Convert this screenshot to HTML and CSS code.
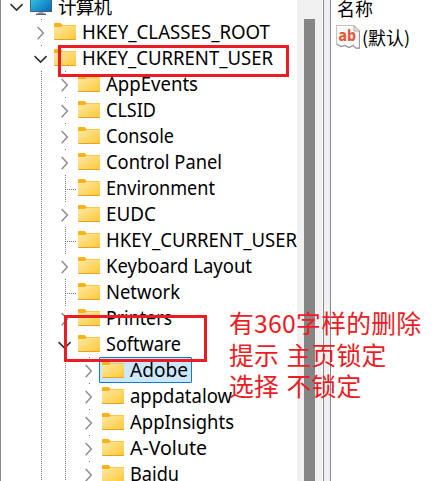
FILE: index.html
```
<!DOCTYPE html>
<html lang="zh-CN">
<head>
<meta charset="utf-8">
<title>注册表编辑器</title>
<link rel="stylesheet" href="styles.css">
</head>
<body>
<svg class="defs" aria-hidden="true">
  <defs>
    <linearGradient id="gold" x1="0" y1="0" x2="1" y2="1"><stop offset="0" stop-color="#ffe9a6"/><stop offset="1" stop-color="#ffc938"/></linearGradient>
    <linearGradient id="screen" x1="0" y1="0" x2="1" y2="1"><stop offset="0" stop-color="#36d5e4"/><stop offset="1" stop-color="#0b68bd"/></linearGradient>
    <symbol id="folder" viewBox="0 0 22 18">
      <path d="M0 1.2Q0 0 1.2 0H6.6L8.6 2H21Q22 2 22 3V8H0Z" fill="#f9b218"/>
      <path d="M0 4H7L8.6 2.6H22V16.5H0Z" fill="url(#gold)"/>
      <path d="M0 16H22V16.2Q22 17 21 17H1Q0 17 0 16.2Z" fill="#e3a51d"/>
    </symbol>
    <symbol id="closed" viewBox="0 0 24 26"><path d="M8.7 8L14.3 14.1L8.7 20.2" fill="none" stroke="#8f8f8f" stroke-width="1.5"/></symbol>
    <symbol id="open" viewBox="0 0 24 26"><path d="M5.6 11.2L11.6 17L17.6 11.2" fill="none" stroke="#333" stroke-width="1.7"/></symbol>
  </defs>
</svg>
<div class="window">
  <div class="tree">
    <div class="row"><svg class="cell"><use href="#open"/></svg><svg class="monitor" viewBox="0 0 22 22"><path d="M0 0H22V19H0Z" fill="#4e5b66"/><path d="M.8 0H21.2V18.2H.8Z" fill="url(#screen)"/><path d="M8.5 19H13.5V21H8.5Z" fill="#a7adb2"/><path d="M6 20.5H16V22H6Z" fill="#59636c"/></svg><svg class="label cjk"><text x="0" y="20.6" textLength="54">计算机</text></svg></div>
    <div class="row"><i class="cell"></i><svg class="cell dot"><use href="#closed"/></svg><svg class="folder"><use href="#folder"/></svg><svg class="label"><text x="0" y="20" textLength="188" lengthAdjust="spacingAndGlyphs">HKEY_CLASSES_ROOT</text></svg></div>
    <div class="row"><i class="cell"></i><svg class="cell dot"><use href="#open"/></svg><svg class="folder"><use href="#folder"/></svg><svg class="label"><text x="0" y="20" textLength="191" lengthAdjust="spacingAndGlyphs">HKEY_CURRENT_USER</text></svg></div>
    <div class="row"><i class="cell"></i><i class="cell line"></i><svg class="cell dot"><use href="#closed"/></svg><svg class="folder"><use href="#folder"/></svg><svg class="label"><text x="0" y="20" textLength="92" lengthAdjust="spacingAndGlyphs">AppEvents</text></svg></div>
    <div class="row"><i class="cell"></i><i class="cell line"></i><svg class="cell dot"><use href="#closed"/></svg><svg class="folder"><use href="#folder"/></svg><svg class="label"><text x="0" y="20" textLength="50" lengthAdjust="spacingAndGlyphs">CLSID</text></svg></div>
    <div class="row"><i class="cell"></i><i class="cell line"></i><svg class="cell dot"><use href="#closed"/></svg><svg class="folder"><use href="#folder"/></svg><svg class="label"><text x="0" y="20" textLength="68" lengthAdjust="spacingAndGlyphs">Console</text></svg></div>
    <div class="row"><i class="cell"></i><i class="cell line"></i><svg class="cell dot"><use href="#closed"/></svg><svg class="folder"><use href="#folder"/></svg><svg class="label"><text x="0" y="20" textLength="116" lengthAdjust="spacingAndGlyphs">Control Panel</text></svg></div>
    <div class="row"><i class="cell"></i><i class="cell line"></i><i class="cell line leaf"></i><svg class="folder"><use href="#folder"/></svg><svg class="label"><text x="0" y="20" textLength="109" lengthAdjust="spacingAndGlyphs">Environment</text></svg></div>
    <div class="row"><i class="cell"></i><i class="cell line"></i><svg class="cell dot"><use href="#closed"/></svg><svg class="folder"><use href="#folder"/></svg><svg class="label"><text x="0" y="20" textLength="50" lengthAdjust="spacingAndGlyphs">EUDC</text></svg></div>
    <div class="row"><i class="cell"></i><i class="cell line"></i><i class="cell line leaf"></i><svg class="folder"><use href="#folder"/></svg><svg class="label"><text x="0" y="20" textLength="191" lengthAdjust="spacingAndGlyphs">HKEY_CURRENT_USER</text></svg></div>
    <div class="row"><i class="cell"></i><i class="cell line"></i><svg class="cell dot"><use href="#closed"/></svg><svg class="folder"><use href="#folder"/></svg><svg class="label"><text x="0" y="20" textLength="146" lengthAdjust="spacingAndGlyphs">Keyboard Layout</text></svg></div>
    <div class="row"><i class="cell"></i><i class="cell line"></i><i class="cell line leaf"></i><svg class="folder"><use href="#folder"/></svg><svg class="label"><text x="0" y="20" textLength="74" lengthAdjust="spacingAndGlyphs">Network</text></svg></div>
    <div class="row"><i class="cell"></i><i class="cell line"></i><svg class="cell dot"><use href="#closed"/></svg><svg class="folder"><use href="#folder"/></svg><svg class="label"><text x="0" y="20" textLength="66" lengthAdjust="spacingAndGlyphs">Printers</text></svg></div>
    <div class="row"><i class="cell"></i><i class="cell line"></i><svg class="cell dot"><use href="#open"/></svg><svg class="folder"><use href="#folder"/></svg><svg class="label"><text x="0" y="20" textLength="75" lengthAdjust="spacingAndGlyphs">Software</text></svg></div>
    <div class="row"><i class="cell"></i><i class="cell line"></i><i class="cell line"></i><svg class="cell dot"><use href="#closed"/></svg><div class="selected"><svg class="folder"><use href="#folder"/></svg><svg class="label"><text x="0" y="20" textLength="58" lengthAdjust="spacingAndGlyphs">Adobe</text></svg></div></div>
    <div class="row"><i class="cell"></i><i class="cell line"></i><i class="cell line"></i><svg class="cell dot"><use href="#closed"/></svg><svg class="folder"><use href="#folder"/></svg><svg class="label"><text x="0" y="20" textLength="102" lengthAdjust="spacingAndGlyphs">appdatalow</text></svg></div>
    <div class="row"><i class="cell"></i><i class="cell line"></i><i class="cell line"></i><svg class="cell dot"><use href="#closed"/></svg><svg class="folder"><use href="#folder"/></svg><svg class="label"><text x="0" y="20" textLength="104" lengthAdjust="spacingAndGlyphs">AppInsights</text></svg></div>
    <div class="row"><i class="cell"></i><i class="cell line"></i><i class="cell line"></i><svg class="cell dot"><use href="#closed"/></svg><svg class="folder"><use href="#folder"/></svg><svg class="label"><text x="0" y="20" textLength="77" lengthAdjust="spacingAndGlyphs">A-Volute</text></svg></div>
    <div class="row"><i class="cell"></i><i class="cell line"></i><i class="cell line"></i><svg class="cell dot"><use href="#closed"/></svg><svg class="folder"><use href="#folder"/></svg><svg class="label"><text x="0" y="20" textLength="49" lengthAdjust="spacingAndGlyphs">Baidu</text></svg></div>
  </div>
  <div class="scrollbar"><div class="thumb"></div></div>
  <div class="splitter"></div>
  <div class="values">
    <div class="heading">名称</div>
    <div class="value">
      <svg class="string" viewBox="0 0 24 24"><path d="M.5.5H18L23.5 6V23.2H20L17 20.5L13 22.5L9 20.5L5 21.5L.5 19Z" fill="#fafafa" stroke="#c4c4c4"/><path d="M18 .5V6H23.5Z" fill="#e5e5e5" stroke="#aaa"/><path d="M.5 19L5 21.5L9 20.5L13 22.5L17 20.5L20 23.2H23.5V6" fill="none" stroke="#999" stroke-width="1.2"/><text x="2.5" y="15.5" textLength="17.5" lengthAdjust="spacingAndGlyphs">ab</text></svg>
      <span>(默认)</span>
    </div>
  </div>
</div>
<div class="mark mark-user"></div>
<div class="mark mark-software"></div>
<div class="note">有360字样的删除<br>提示 主页锁定<br>选择 不锁定</div>
</body>
</html>
```
FILE: styles.css
```
* { box-sizing: border-box; }
body { margin: 0; width: 442px; height: 481px; overflow: hidden; position: relative; background: #fff; color: #000; font-family: "Noto Sans CJK SC", sans-serif; }
.defs { position: absolute; width: 0; height: 0; }
.window { display: flex; height: 481px; overflow: hidden; border-left: 1px solid #828790; }
.tree { width: 296px; flex: none; overflow: hidden; padding-left: 4px; margin-top: -7px; }
.row { display: flex; height: 26px; }
.cell { flex: none; display: block; width: 24px; height: 26px; }
.line { background: repeating-linear-gradient(to bottom, #777 0 1px, transparent 1px 2px) 12px 0 / 1px 26px no-repeat; }
.leaf { background: repeating-linear-gradient(to bottom, #777 0 1px, transparent 1px 2px) 12px 0 / 1px 26px no-repeat, repeating-linear-gradient(to right, #777 0 1px, transparent 1px 2px) 12px 14px / 12px 1px no-repeat; }
.dot { background: linear-gradient(#777, #777) 12px 0 / 1px 1px no-repeat; }
.folder { flex: none; width: 22px; height: 18px; margin: 4px 6px 0 1px; }
.monitor { flex: none; width: 22px; height: 22px; margin: 0 6px 0 1px; }
.label { flex: none; width: 200px; height: 26px; overflow: visible; font: 19.5px "Noto Sans", "Noto Sans CJK SC", sans-serif; }
.cjk { font-family: "Noto Sans CJK SC", sans-serif; font-size: 18.5px; }
.selected { display: flex; width: 93px; height: 26px; margin-left: -2px; padding-left: 1px; border: 1px solid #0f7bd0; border-radius: 1px; background: #cce8ff; }
.selected .folder { margin-top: 3px; }
.selected .label { width: 60px; margin-top: -1px; }
.scrollbar { flex: none; width: 25px; background: #f0f0f0; padding: 19px 7px 0; }
.thumb { height: 462px; background: #858585; }
.splitter { flex: none; width: 8px; margin-left: 1px; background: #f0f0f0; border: solid #828790; border-width: 0 1px; }
.values { flex: 1; padding-left: 5px; }
.heading { height: 25px; margin: -5px 0 0 1px; font-size: 18px; line-height: 27px; }
.value { display: flex; align-items: center; gap: 2px; margin-top: 5px; height: 24px; font-size: 18px; line-height: 24px; white-space: nowrap; }
.string { flex: none; width: 24px; height: 24px; }
.string text { font: bold 15px "DejaVu Sans", sans-serif; fill: #e55738; }
.mark { position: absolute; border: 3px solid #ed1c24; }
.mark-user { left: 58px; top: 45px; width: 231px; height: 32px; }
.mark-software { left: 64px; top: 315px; width: 143px; height: 47px; }
.note { position: absolute; left: 229px; top: 307px; font-size: 24.8px; line-height: 31.5px; letter-spacing: .25px; word-spacing: 1.5px; white-space: nowrap; color: #ed1c24; }
```
